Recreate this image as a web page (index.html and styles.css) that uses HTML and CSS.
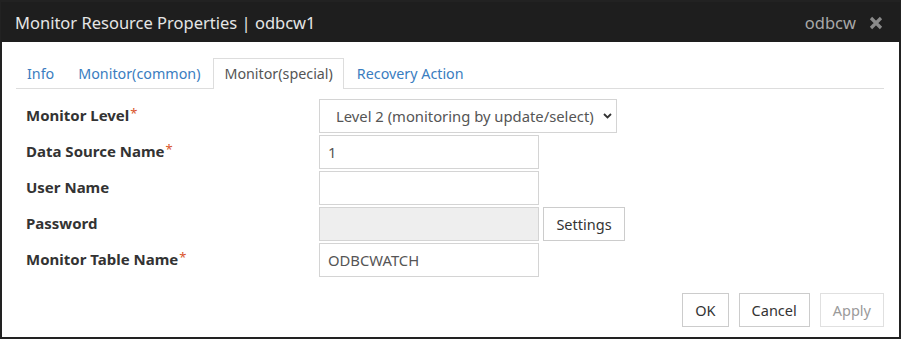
FILE: index.html
```html
<!DOCTYPE html>
<html>
<head>
<meta charset="utf-8">
<link rel="stylesheet" href="styles.css">
</head>
<body>
<div class="dialog">
  <div class="header">
    <div class="title">Monitor Resource Properties | odbcw1</div>
    <div class="header-right">
      <span class="type">odbcw</span>
      <svg class="close" width="14" height="14" viewBox="0 0 14 14"><path d="M2 2 L12 12 M12 2 L2 12" stroke="#8a8a8a" stroke-width="3.2" stroke-linecap="butt"/></svg>
    </div>
  </div>
  <div class="body">
    <div class="tabs">
      <a class="tab">Info</a>
      <a class="tab">Monitor(common)</a>
      <a class="tab active">Monitor(special)</a>
      <a class="tab">Recovery Action</a>
    </div>
    <div class="form">
      <div class="label">Monitor Level<span class="req">*</span></div>
      <div class="field">
        <div class="select">
          <span>Level 2 (monitoring by update/select)</span>
          <svg class="chev" width="9" height="6" viewBox="0 0 9 6"><path d="M1 1 L4.5 4.5 L8 1" fill="none" stroke="#333" stroke-width="1.8"/></svg>
        </div>
      </div>
      <div class="label">Data Source Name<span class="req">*</span></div>
      <div class="field"><div class="input">1</div></div>
      <div class="label">User Name</div>
      <div class="field"><div class="input"></div></div>
      <div class="label">Password</div>
      <div class="field"><div class="input disabled"></div><button class="btn settings">Settings</button></div>
      <div class="label">Monitor Table Name<span class="req">*</span></div>
      <div class="field"><div class="input">ODBCWATCH</div></div>
    </div>
    <div class="footer">
      <button class="btn">OK</button>
      <button class="btn">Cancel</button>
      <button class="btn disabled">Apply</button>
    </div>
  </div>
</div>
</body>
</html>
```
FILE: styles.css
```css
* { box-sizing: border-box; }
html, body { margin: 0; padding: 0; background: #fff; }
body { font-family: "Noto Sans", "Open Sans", sans-serif; font-size: 14.5px; color: #333; }
.dialog {
  width: 901px;
  height: 339px;
  border: 2px solid #222;
  background: #fff;
  display: flex;
  flex-direction: column;
}
.header {
  height: 40px;
  background: #1e1e1e;
  display: flex;
  align-items: center;
  justify-content: space-between;
  padding: 0 17px 0 14px;
  margin: 0 -1px;
}
.title { color: #e6e6e6; font-size: 16.5px; }
.header-right { display: flex; align-items: center; gap: 13px; }
.type { color: #a8a8a8; font-size: 16.5px; }
.close { display: block; margin-top: 1px; }
.body { flex: 1; padding: 16px 15px 10px 14px; display: flex; flex-direction: column; }
.tabs {
  display: flex;
  border-bottom: 1px solid #ddd;
  height: 31px;
}
.tab {
  display: block;
  padding: 0 10px;
  margin-right: 2px;
  font-size: 14.3px;
  line-height: 29px;
  height: 31px;
  color: #3a7dc0;
  border: 1px solid transparent;
  border-bottom: none;
}
.tab.active {
  color: #555;
  border-color: #ddd;
  background: #fff;
}
.form {
  display: grid;
  grid-template-columns: 303px 1fr;
  row-gap: 2px;
  margin-top: 10px;
}
.label {
  font-weight: bold;
  font-size: 15px;
  color: #333;
  padding-left: 10px;
  display: flex;
  align-items: center;
  height: 34px;
  padding-bottom: 2px;
}
.req { color: #d9532c; font-weight: normal; font-size: 13px; align-self: flex-start; margin-top: 5px; margin-left: 1px; }
.field { display: flex; gap: 4px; align-items: center; }
.input {
  width: 220px;
  height: 34px;
  border: 1px solid #d4d4d4;
  padding: 0 8px;
  color: #555;
  font-size: 14.8px;
  line-height: 32px;
}
.input.disabled { background: #eee; }
.select {
  width: 298px;
  height: 34px;
  border: 1px solid #d4d4d4;
  padding: 0 4px 0 16px;
  color: #555;
  font-size: 14.8px;
  display: flex;
  align-items: center;
  justify-content: space-between;
}
.chev { display: block; }
.btn {
  font-family: inherit;
  font-size: 14.5px;
  height: 34px;
  background: #fff;
  border: 1px solid #ccc;
  color: #333;
  padding: 0 12px;
  border-radius: 0;
}
.btn.disabled { color: #9a9a9a; border-color: #e0e0e0; }
.settings { width: 82px; }
.footer {
  margin-top: auto;
  display: flex;
  justify-content: flex-end;
  gap: 10px;
}
```
